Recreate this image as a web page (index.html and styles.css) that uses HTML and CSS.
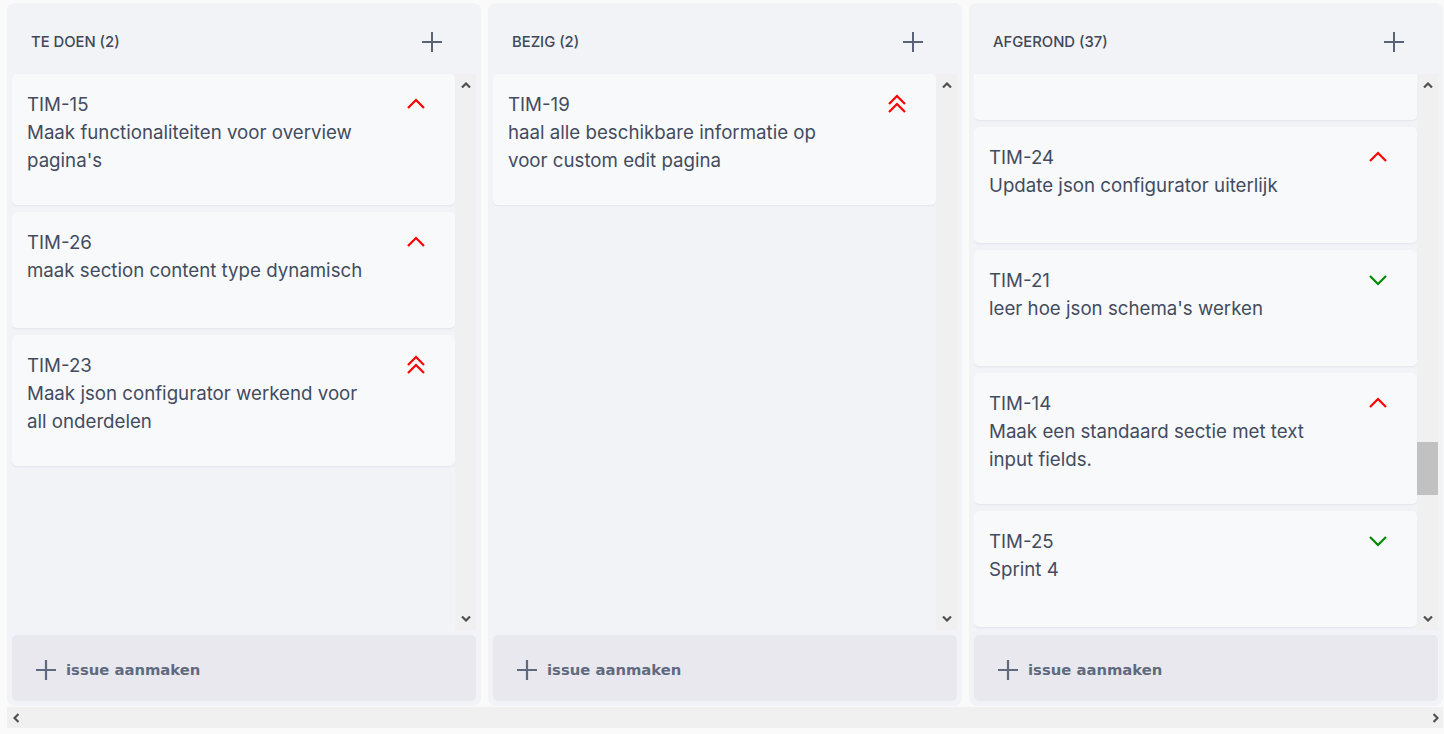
FILE: index.html
```html
<!DOCTYPE html>
<html lang="nl">
<head>
<meta charset="utf-8">
<title>Board</title>
<link rel="stylesheet" href="styles.css">
</head>
<body>
<div class="board-wrap">
  <div class="board">
    <section class="column">
      <header class="col-head">
        <span class="col-title">TE DOEN (2)</span>
        <svg class="head-plus" viewBox="0 0 20 20"><path d="M10 0V20M0 10H20"/></svg>
      </header>
      <div class="col-body">
        <div class="list">
          <div class="list-inner">
            <article class="card"><div class="card-text"><div>TIM-15</div><div>Maak functionaliteiten voor overview pagina's</div></div>
              <svg class="prio up" viewBox="0 0 20 12"><path d="M2 11L10 3L18 11"/></svg></article>
            <article class="card"><div class="card-text"><div>TIM-26</div><div>maak section content type dynamisch</div></div>
              <svg class="prio up" viewBox="0 0 20 12"><path d="M2 11L10 3L18 11"/></svg></article>
            <article class="card"><div class="card-text"><div>TIM-23</div><div>Maak json configurator werkend voor all onderdelen</div></div>
              <svg class="prio up2" viewBox="0 0 20 20"><path d="M2 10L10 2L18 10M2 18L10 10L18 18"/></svg></article>
          </div>
        </div>
        <div class="vscroll">
          <svg class="sarrow" viewBox="0 0 10 6"><path d="M1 5.5L5 1.5L9 5.5"/></svg>
          <div class="track"></div>
          <svg class="sarrow" viewBox="0 0 10 6"><path d="M1 0.5L5 4.5L9 0.5"/></svg>
        </div>
      </div>
      <button class="add-issue"><svg class="add-plus" viewBox="0 0 20 20"><path d="M10 0V20M0 10H20"/></svg><span>issue aanmaken</span></button>
    </section>

    <section class="column">
      <header class="col-head">
        <span class="col-title">BEZIG (2)</span>
        <svg class="head-plus" viewBox="0 0 20 20"><path d="M10 0V20M0 10H20"/></svg>
      </header>
      <div class="col-body">
        <div class="list">
          <div class="list-inner">
            <article class="card"><div class="card-text"><div>TIM-19</div><div>haal alle beschikbare informatie op voor custom edit pagina</div></div>
              <svg class="prio up2" viewBox="0 0 20 20"><path d="M2 10L10 2L18 10M2 18L10 10L18 18"/></svg></article>
          </div>
        </div>
        <div class="vscroll">
          <svg class="sarrow" viewBox="0 0 10 6"><path d="M1 5.5L5 1.5L9 5.5"/></svg>
          <div class="track"></div>
          <svg class="sarrow" viewBox="0 0 10 6"><path d="M1 0.5L5 4.5L9 0.5"/></svg>
        </div>
      </div>
      <button class="add-issue"><svg class="add-plus" viewBox="0 0 20 20"><path d="M10 0V20M0 10H20"/></svg><span>issue aanmaken</span></button>
    </section>

    <section class="column">
      <header class="col-head">
        <span class="col-title">AFGEROND (37)</span>
        <svg class="head-plus" viewBox="0 0 20 20"><path d="M10 0V20M0 10H20"/></svg>
      </header>
      <div class="col-body">
        <div class="list">
          <div class="list-inner scrolled">
            <article class="card" aria-hidden="true"></article>
            <article class="card"><div class="card-text"><div>TIM-24</div><div>Update json configurator uiterlijk</div></div>
              <svg class="prio up" viewBox="0 0 20 12"><path d="M2 11L10 3L18 11"/></svg></article>
            <article class="card"><div class="card-text"><div>TIM-21</div><div>leer hoe json schema's werken</div></div>
              <svg class="prio down" viewBox="0 0 20 12"><path d="M2 2L10 10L18 2"/></svg></article>
            <article class="card"><div class="card-text"><div>TIM-14</div><div>Maak een standaard sectie met text input fields.</div></div>
              <svg class="prio up" viewBox="0 0 20 12"><path d="M2 11L10 3L18 11"/></svg></article>
            <article class="card"><div class="card-text"><div>TIM-25</div><div>Sprint 4</div></div>
              <svg class="prio down" viewBox="0 0 20 12"><path d="M2 2L10 10L18 2"/></svg></article>
          </div>
        </div>
        <div class="vscroll">
          <svg class="sarrow" viewBox="0 0 10 6"><path d="M1 5.5L5 1.5L9 5.5"/></svg>
          <div class="track"><div class="thumb"></div></div>
          <svg class="sarrow" viewBox="0 0 10 6"><path d="M1 0.5L5 4.5L9 0.5"/></svg>
        </div>
      </div>
      <button class="add-issue"><svg class="add-plus" viewBox="0 0 20 20"><path d="M10 0V20M0 10H20"/></svg><span>issue aanmaken</span></button>
    </section>
  </div>
  <div class="hscroll">
    <svg class="harrow" viewBox="0 0 6 10"><path d="M5.5 1L1.5 5L5.5 9"/></svg>
    <svg class="harrow" viewBox="0 0 6 10"><path d="M0.5 1L4.5 5L0.5 9"/></svg>
  </div>
</div>
</body>
</html>
```
FILE: styles.css
```css
* { box-sizing: border-box; }
html, body { margin: 0; padding: 0; }
body {
  background: #fafafa;
  font-family: Inter, "Noto Sans", sans-serif;
  color: #434c5e;
  width: 1444px;
  height: 734px;
  overflow: hidden;
}
.board-wrap {
  padding: 3px 1px 0 7px;
}
.board {
  display: flex;
  gap: 7px;
}
.column {
  width: 474px;
  height: 703px;
  flex: none;
  background: #f2f3f7;
  border-radius: 8px;
  padding: 0 5px 5px;
  display: flex;
  flex-direction: column;
}
.col-head {
  height: 71px;
  flex: none;
  display: flex;
  align-items: center;
  justify-content: space-between;
  padding: 6px 34px 0 19px;
}
.col-title {
  font-size: 14.8px;
  font-weight: 500;
  color: #3e4859;
}
.head-plus {
  width: 20px;
  height: 20px;
  stroke: #596277;
  stroke-width: 2;
  fill: none;
}
.col-body {
  height: 556px;
  flex: none;
  display: flex;
}
.list {
  flex: 1;
  overflow: hidden;
}
.list-inner {
  display: flex;
  flex-direction: column;
  gap: 7px;
}
.list-inner.scrolled {
  margin-top: -70px;
}
.card {
  flex: none;
  min-height: 116px;
  background: #f8f9fb;
  border-radius: 5px;
  box-shadow: 0 1px 2px rgba(30, 40, 70, 0.07);
  padding: 17px 29px 30px 15px;
  display: flex;
  justify-content: space-between;
  align-items: flex-start;
  font-size: 18.7px;
  line-height: 28px;
}
.card-text {
  width: 340px;
}
.prio {
  width: 20px;
  fill: none;
  stroke-width: 2.2;
  flex: none;
}
.prio.up { height: 12px; margin-top: 6px; stroke: #ff0000; }
.prio.down { height: 12px; margin-top: 7px; stroke: #008800; }
.prio.up2 { height: 20px; margin-top: 3px; stroke: #ff0000; }
.vscroll {
  width: 21px;
  flex: none;
  background: #f0f0f0;
  display: flex;
  flex-direction: column;
  align-items: center;
}
.sarrow {
  width: 10px;
  height: 6px;
  margin: 8px 0;
  fill: none;
  stroke: #505050;
  stroke-width: 2.2;
}
.track {
  flex: 1;
  width: 100%;
}
.thumb {
  margin-top: 346px;
  height: 53px;
  background: #c1c1c1;
}
.add-issue {
  margin-top: 5px;
  height: 66px;
  flex: none;
  border: 0;
  border-radius: 5px;
  background: #e8e8ee;
  display: flex;
  align-items: center;
  gap: 10px;
  padding: 3px 0 0 24px;
  font-family: "DejaVu Sans", Verdana, sans-serif;
  font-weight: bold;
  font-size: 14.8px;
  color: #5f6a7f;
  cursor: pointer;
}
.add-plus {
  width: 20px;
  height: 20px;
  stroke: #5f6a7f;
  stroke-width: 2.2;
  fill: none;
}
.hscroll {
  margin-top: 1px;
  height: 21px;
  background: #f0f0f0;
  display: flex;
  justify-content: space-between;
  align-items: center;
  padding: 0 4px 0 6px;
}
.harrow {
  width: 6px;
  height: 10px;
  fill: none;
  stroke: #505050;
  stroke-width: 2.2;
}
```
